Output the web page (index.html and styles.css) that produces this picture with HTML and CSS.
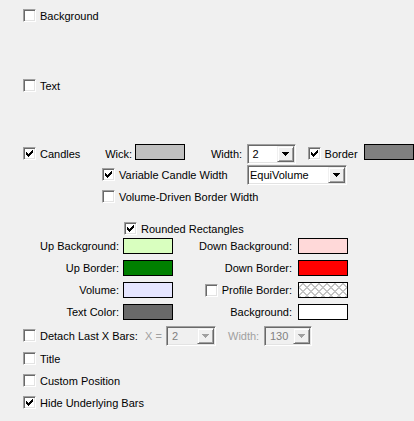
FILE: index.html
```html
<!DOCTYPE html>
<html>
<head>
    <title>Candle Settings</title>
    <link rel="stylesheet" href="styles.css">
</head>
<body>
    <div class="panel">

        <div class="row r-bg">
            <label class="chk"><span class="box"></span>Background</label>
        </div>

        <div class="row r-text">
            <label class="chk"><span class="box"></span>Text</label>
        </div>

        <!-- Candles line: wick, width, border -->
        <div class="row r-candles tall">
            <label class="chk c-candles"><span class="box on"><svg width="7" height="7" viewBox="0 0 7 7"><path d="M6 0h1v1h-1zM5 1h2v1h-2zM0 2h1v1h-1zM4 2h3v1h-3zM0 3h2v1h-2zM3 3h3v1h-3zM0 4h5v1h-5zM1 5h3v1h-3zM2 6h1v1h-1z"/></svg></span>Candles</label>
            <span class="lbl l-wick">Wick:</span>
            <span class="swatch silver"></span>
            <span class="lbl l-width">Width:</span>
            <div class="combo w-small">
                <span class="value">2</span>
                <span class="btn"><svg width="7" height="4" viewBox="0 0 7 4"><path d="M0 0h7v1h-7zM1 1h5v1h-5zM2 2h3v1h-3zM3 3h1v1h-1z"/></svg></span>
            </div>
            <label class="chk c-border"><span class="box on"><svg width="7" height="7" viewBox="0 0 7 7"><path d="M6 0h1v1h-1zM5 1h2v1h-2zM0 2h1v1h-1zM4 2h3v1h-3zM0 3h2v1h-2zM3 3h3v1h-3zM0 4h5v1h-5zM1 5h3v1h-3zM2 6h1v1h-1z"/></svg></span>Border</label>
            <span class="swatch gray"></span>
        </div>

        <div class="row r-variable tall">
            <label class="chk c-variable"><span class="box on"><svg width="7" height="7" viewBox="0 0 7 7"><path d="M6 0h1v1h-1zM5 1h2v1h-2zM0 2h1v1h-1zM4 2h3v1h-3zM0 3h2v1h-2zM3 3h3v1h-3zM0 4h5v1h-5zM1 5h3v1h-3zM2 6h1v1h-1z"/></svg></span>Variable Candle Width</label>
            <div class="combo w-wide">
                <span class="value tight">EquiVolume</span>
                <span class="btn"><svg width="7" height="4" viewBox="0 0 7 4"><path d="M0 0h7v1h-7zM1 1h5v1h-5zM2 2h3v1h-3zM3 3h1v1h-1z"/></svg></span>
            </div>
        </div>

        <div class="row r-volume">
            <label class="chk"><span class="box"></span>Volume-Driven Border Width</label>
        </div>

        <div class="row r-rounded">
            <label class="chk"><span class="box on"><svg width="7" height="7" viewBox="0 0 7 7"><path d="M6 0h1v1h-1zM5 1h2v1h-2zM0 2h1v1h-1zM4 2h3v1h-3zM0 3h2v1h-2zM3 3h3v1h-3zM0 4h5v1h-5zM1 5h3v1h-3zM2 6h1v1h-1z"/></svg></span>Rounded Rectangles</label>
        </div>

        <!-- Colour grid -->
        <div class="colors">
            <span class="name left">Up Background:</span>
            <span class="swatch up-bg"></span>
            <span class="name right">Down Background:</span>
            <span class="swatch down-bg"></span>

            <span class="name left">Up Border:</span>
            <span class="swatch up-border"></span>
            <span class="name right">Down Border:</span>
            <span class="swatch down-border"></span>

            <span class="name left">Volume:</span>
            <span class="swatch volume"></span>
            <label class="name right profile"><span class="box"></span>Profile Border:</label>
            <span class="swatch hatch"></span>

            <span class="name left">Text Color:</span>
            <span class="swatch text-color"></span>
            <span class="name right">Background:</span>
            <span class="swatch white"></span>
        </div>

        <div class="row r-detach tall">
            <label class="chk c-detach"><span class="box"></span>Detach Last X Bars:</label>
            <span class="lbl off l-x">X =</span>
            <div class="combo w-x off">
                <span class="value">2</span>
                <span class="btn"><svg width="7" height="4" viewBox="0 0 7 4"><path d="M0 0h7v1h-7zM1 1h5v1h-5zM2 2h3v1h-3zM3 3h1v1h-1z"/></svg></span>
            </div>
            <span class="lbl off l-width2">Width:</span>
            <div class="combo w-bars off">
                <span class="value">130</span>
                <span class="btn"><svg width="7" height="4" viewBox="0 0 7 4"><path d="M0 0h7v1h-7zM1 1h5v1h-5zM2 2h3v1h-3zM3 3h1v1h-1z"/></svg></span>
            </div>
        </div>

        <div class="row r-title">
            <label class="chk"><span class="box"></span>Title</label>
        </div>

        <div class="row r-custom">
            <label class="chk"><span class="box"></span>Custom Position</label>
        </div>

        <div class="row r-hide">
            <label class="chk"><span class="box on"><svg width="7" height="7" viewBox="0 0 7 7"><path d="M6 0h1v1h-1zM5 1h2v1h-2zM0 2h1v1h-1zM4 2h3v1h-3zM0 3h2v1h-2zM3 3h3v1h-3zM0 4h5v1h-5zM1 5h3v1h-3zM2 6h1v1h-1z"/></svg></span>Hide Underlying Bars</label>
        </div>

    </div>
</body>
</html>
```

FILE: styles.css
```css
body {
    font-family: "Liberation Sans", Arial, sans-serif;
    font-size: 11px;
    line-height: 13px;
    color: #000;
    margin: 0;
    padding: 0;
    width: 414px;
    height: 421px;
    overflow: hidden;
    background-color: #f0f0f0;
}

.panel {
    padding-top: 9px;
}

.row {
    display: flex;
    align-items: flex-start;
    height: 13px;
    padding-left: 23px;
    white-space: nowrap;
}

/* rows holding a combo box are 20px high, text sits 3px down */
.row.tall {
    height: 20px;
}

.row.tall .chk {
    margin-top: 3px;
}

.row.tall .lbl {
    margin-top: 4px;
}

/* vertical rhythm */
.r-text { margin-top: 57px; }
.r-candles { margin-top: 52px; }
.r-variable { margin-top: 1px; padding-left: 102px; }
.r-volume { margin-top: 5px; padding-left: 102px; }
.r-rounded { margin-top: 19px; padding-left: 124px; }
.r-detach { margin-top: 6px; }
.r-title { margin-top: 6px; }
.r-custom { margin-top: 9px; }
.r-hide { margin-top: 9px; }

/* checkbox: text runs 1px lower than the box centre */
.chk {
    display: flex;
    align-items: flex-start;
    gap: 4px;
    line-height: 15px;
    white-space: nowrap;
}

.box {
    box-sizing: border-box;
    width: 13px;
    height: 13px;
    flex: none;
    padding: 2px 0 0 2px;
    background-color: #fff;
    border: 1px solid;
    border-color: #a0a0a0 #fff #fff #a0a0a0;
    box-shadow: inset 1px 1px #696969, inset -1px -1px #e3e3e3;
}

.box svg {
    display: block;
    fill: #000;
    shape-rendering: crispEdges;
}

/* plain labels */
.lbl {
    display: block;
}

.lbl.off {
    color: #a0a0a0;
}

.c-candles { width: 83px; }
.l-wick { width: 30px; }
.l-width { width: 36px; margin-left: 26px; }
.c-border { width: 57px; margin-left: 12px; }
.c-variable { width: 145px; }
.c-detach { width: 122px; }
.l-x { width: 21px; }
.l-width2 { width: 36px; margin-left: 12px; }

/* colour swatches */
.swatch {
    box-sizing: border-box;
    display: block;
    width: 50px;
    height: 16px;
    flex: none;
    border: 1px solid #000;
}

.silver { background-color: #c0c0c0; }
.gray { background-color: #808080; }
.up-bg { background-color: #d9ffbf; }
.up-border { background-color: #008000; }
.volume { background-color: #e6e6ff; }
.text-color { background-color: #696969; }
.down-bg { background-color: #ffd9d9; }
.down-border { background-color: #ff0000; }
.white { background-color: #fff; }

.hatch {
    background-color: #fff;
    background-image:
        repeating-linear-gradient(45deg, #c4c4c4 0 1.5px, transparent 1.5px 5.66px),
        repeating-linear-gradient(-45deg, #c4c4c4 0 1.5px, transparent 1.5px 5.66px);
}

/* combo box */
.combo {
    box-sizing: border-box;
    display: flex;
    height: 20px;
    flex: none;
    padding: 1px;
    background-color: #fff;
    border: 1px solid;
    border-color: #a0a0a0 #fff #fff #a0a0a0;
    box-shadow: inset 1px 1px #696969, inset -1px -1px #e3e3e3;
}

.combo .value {
    flex: 1;
    padding-left: 4px;
    line-height: 17px;
}

.combo .value.tight {
    padding-left: 1px;
}

.combo .btn {
    box-sizing: border-box;
    display: flex;
    align-items: center;
    justify-content: center;
    width: 17px;
    height: 16px;
    background-color: #f0f0f0;
    border: 1px solid;
    border-color: #f0f0f0 #696969 #696969 #f0f0f0;
    box-shadow: inset 1px 1px #fff, inset -1px -1px #a0a0a0;
}

.combo .btn svg {
    display: block;
    fill: #000;
    shape-rendering: crispEdges;
}

.combo.off {
    background-color: #f0f0f0;
}

.combo.off .value {
    color: #808080;
}

.combo.off .btn svg {
    fill: #a0a0a0;
}

.w-small { width: 49px; }
.w-wide { width: 100px; }
.w-x { width: 50px; }
.w-bars { width: 48px; }

/* colour grid */
.colors {
    display: grid;
    grid-template-columns: 123px 50px 125px 50px;
    grid-auto-rows: 16px;
    row-gap: 6px;
    margin-top: 3px;
    white-space: nowrap;
}

.name {
    line-height: 17px;
}

.name.left {
    text-align: right;
    padding-right: 4px;
}

.name.right {
    text-align: right;
    padding-right: 6px;
}

.name.profile {
    display: flex;
    align-items: center;
    justify-content: flex-end;
    gap: 4px;
}
```
